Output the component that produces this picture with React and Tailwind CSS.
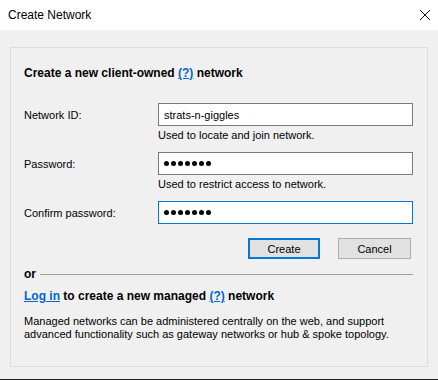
import React from 'react';

const font = { fontFamily: '"Liberation Sans", Arial, sans-serif' };

const Dots = () => (
  <div className="flex items-center gap-[2px]">
    {Array.from({ length: 7 }).map((_, i) => (
      <span key={i} className="block w-[5px] h-[5px] rounded-full bg-black" />
    ))}
  </div>
);

const Field = ({ label, focused, children }) => (
  <div className="flex items-center">
    <div className="w-[134px] text-[11px] leading-[14px] text-black">{label}</div>
    <div
      className={`flex-1 h-[23px] bg-white flex items-center pl-[5px] ${
        focused ? 'border border-[#0078d7]' : 'border border-[#7a7a7a]'
      }`}
    >
      {children}
    </div>
  </div>
);

const Hint = ({ children }) => (
  <div className="pl-[134px] mt-[2px] text-[11px] leading-[14px] text-black">{children}</div>
);

export default function App() {
  return (
    <div className="w-[438px] h-[380px] flex flex-col bg-[#f0f0f0] text-black" style={font}>
      {/* title bar */}
      <div className="h-[30px] bg-white flex items-center justify-between pl-[8px] pr-[7px]">
        <span className="text-[12px] leading-[14px]">Create Network</span>
        <svg width="12" height="12" viewBox="0 0 12 12">
          <path d="M1 1 L11 11 M11 1 L1 11" stroke="#111" strokeWidth="1" fill="none" />
        </svg>
      </div>

      <div className="flex-1 pt-[17px] px-[10px] pb-[12px]">
        <div className="h-full border border-[#dcdcdc] pt-[18px] pl-[13px] pr-[14px]">
          <div className="text-[12px] leading-[14px] font-bold">
            Create a new client-owned{' '}
            <span className="text-[#0066cc] underline">(?)</span> network
          </div>

          <div className="mt-[23px]">
            <Field label="Network ID:">
              <span className="text-[11px] leading-[14px]">strats-n-giggles</span>
            </Field>
            <Hint>Used to locate and join network.</Hint>
          </div>

          <div className="mt-[10px]">
            <Field label="Password:">
              <Dots />
            </Field>
            <Hint>Used to restrict access to network.</Hint>
          </div>

          <div className="mt-[10px]">
            <Field label="Confirm password:" focused>
              <Dots />
            </Field>
          </div>

          <div className="flex justify-end gap-[18px] mt-[14px] pr-[2px]">
            <button className="w-[72px] h-[21px] bg-[#e1e1e1] border-2 border-[#0078d7] text-[11px] leading-[14px]">
              Create
            </button>
            <button className="w-[73px] h-[21px] bg-[#e1e1e1] border border-[#adadad] text-[11px] leading-[14px]">
              Cancel
            </button>
          </div>

          <div className="flex items-center gap-[4px] mt-[8px]">
            <span className="text-[12px] leading-[14px] font-bold">or</span>
            <div className="flex-1 h-px bg-[#a0a0a0]" />
          </div>

          <div className="mt-[8px] text-[12px] leading-[14px] font-bold">
            <span className="text-[#0066cc] underline">Log in</span> to create a new managed{' '}
            <span className="text-[#0066cc] underline">(?)</span> network
          </div>

          <p className="mt-[12px] text-[11px] leading-[13px]">
            Managed networks can be administered centrally on the web, and support
            <br />
            advanced functionality such as gateway networks or hub &amp; spoke topology.
          </p>
        </div>
      </div>
      <div className="h-px bg-[#1f1f1f]" />
    </div>
  );
}
